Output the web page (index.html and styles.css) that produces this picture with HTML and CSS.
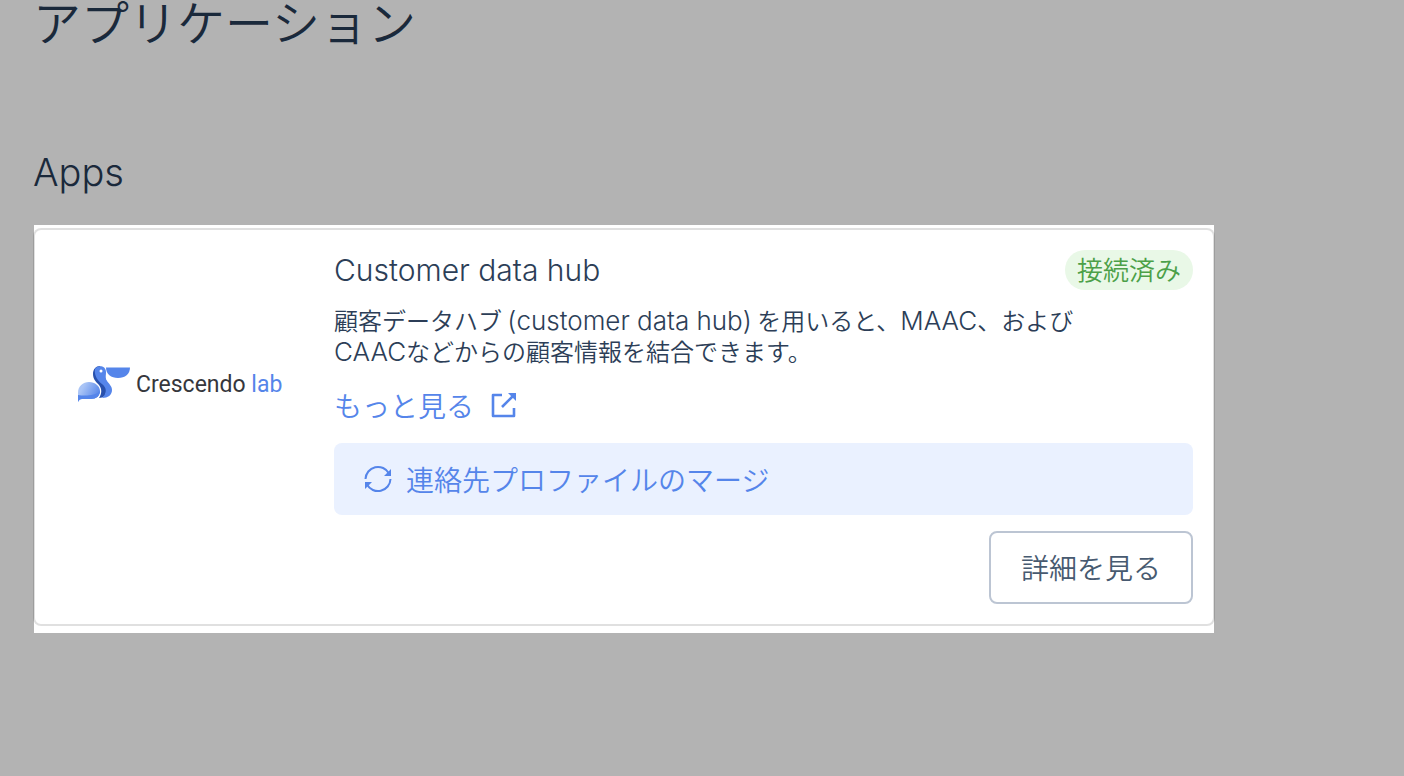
FILE: index.html
```html
<!DOCTYPE html>
<html lang="ja">
  <head>
    <meta charset="UTF-8" />
    <meta name="viewport" content="width=device-width, initial-scale=1" />
    <title>アプリケーション</title>
    <link rel="stylesheet" href="styles.css">
  </head>
  <body>
    <main class="page">
      <h1>アプリケーション</h1>
      <h2>Apps</h2>

      <div class="spotlight">
        <section class="app-card">
          <div class="logo">
            <svg class="logo-mark" viewBox="0 0 52 36" aria-hidden="true">
              <defs>
                <linearGradient id="wing" x1="0.2" y1="0.3" x2="1" y2="0.7">
                  <stop offset="0" stop-color="#a9c4f6" />
                  <stop offset="1" stop-color="#4f80e8" />
                </linearGradient>
              </defs>
              <path fill="#2850ac" d="M15 8C15 3 18 0 22 0l4 9 4 10-3 11c-2 1-4 2-6 2 3-5 3-9 0-13-3-3-6-6-6-11z" />
              <path fill="#5585ea" d="M17 3c2-4 11-4 11 3 0 4-1 6 1 9 2 3 5 5 5 9 0 5-4 8-10 8 5-5 5-10 0-14-5-4-8-9-7-15z" />
              <circle cx="23" cy="5" r="1.500" fill="#fff" />
              <path fill="#5585ea" d="M28 1.500h24C52 8 47 12 40 12S28 8 28 1.500z" />
              <path fill="url(#wing)" d="M0 36V27c0-7 5-11 11-11s11 4 11 9-4 8-9 8H4c-2 0-3 1-4 3z" />
              <path fill="#5585ea" d="M0 29c7 1 17 1 22-4 0 5-4 8-9 8H4c-2 0-3 1-4 3z" />
            </svg>
            <span class="logo-text">Crescendo <span>lab</span></span>
          </div>

          <div class="content">
            <div class="card-head">
              <h3>Customer data hub</h3>
              <span class="badge">接続済み</span>
            </div>
            <p class="desc">
              顧客データハブ <span class="latin">(customer data hub)</span> を用いると、<span class="latin">MAAC</span>、および<br /><span class="latin">CAAC</span>などからの顧客情報を結合できます。
            </p>
            <a class="more" href="#">
              もっと見る
              <svg viewBox="0 0 28 28" aria-hidden="true">
                <path d="M12 4H3v21h21v-8M12 16L23 5" fill="none" stroke="currentColor" stroke-width="2.6" stroke-linejoin="round" />
                <path d="M18 2h8v8z" fill="currentColor" />
              </svg>
            </a>
            <div class="feature">
              <svg viewBox="0 0 28 28" aria-hidden="true">
                <path d="M1.500 14A12.500 12.500 0 0 1 25 8.500M26.500 14A12.500 12.500 0 0 1 3 19.500" fill="none" stroke="currentColor" stroke-width="2" />
                <path d="M27 4v7h-7zM1 24v-7h7z" fill="currentColor" />
              </svg>
              連絡先プロファイルのマージ
            </div>
            <button class="detail-btn" type="button">詳細を見る</button>
          </div>
        </section>
      </div>
    </main>
  </body>
</html>
```

FILE: styles.css
```css
* {
  box-sizing: border-box;
}

body {
  margin: 0;
  background-color: #b3b3b3;
  color: #1a293b;
  font-family: "Noto Sans CJK JP", sans-serif;
  font-weight: 350;
}

.page {
  padding: 0 190px 40px 33px;
}

h1,
h2,
h3,
p {
  margin: 0;
  font-weight: 350;
}

h1 {
  font-size: 48px;
  line-height: 40px;
}

h2 {
  margin: 108px 0 29px;
  font-family: Inter, "Noto Sans CJK JP", sans-serif;
  font-size: 38px;
  line-height: 48px;
}

/* highlighted area behind the card */
.spotlight {
  margin-left: 1px;
  padding: 3px 0 7px;
  background-color: #fff;
}

.app-card {
  display: flex;
  margin: 0 -1px;
  padding: 20px;
  border: 2px solid rgba(0, 0, 0, 0.12);
  border-radius: 8px;
  background-color: #fff;
  background-clip: padding-box;
  color: #2c3e57;
}

.logo {
  display: flex;
  flex: 0 0 279px;
  align-items: center;
  align-self: flex-start;
  gap: 6px;
  margin-top: 116px;
  padding-left: 23px;
}

.logo-mark {
  width: 52px;
  height: 36px;
}

.logo-text {
  color: #36373c;
  font-family: Roboto, sans-serif;
  font-size: 23px;
  font-weight: 400;
  white-space: nowrap;
}

.logo-text span {
  color: #5585ea;
}

.content {
  display: flex;
  flex: 1;
  flex-direction: column;
}

.card-head {
  display: flex;
  align-items: center;
  justify-content: space-between;
}

h3 {
  font-family: Inter, "Noto Sans CJK JP", sans-serif;
  font-size: 30px;
  line-height: 40px;
}

.badge {
  padding: 0 12px 2px;
  border-radius: 20px;
  background-color: #e9f8e7;
  color: #4ca048;
  font-size: 26px;
  line-height: 38px;
}

.desc {
  margin-top: 14px;
  font-size: 24px;
  line-height: 31px;
}

.latin {
  font-family: Inter, sans-serif;
  font-size: 26px;
  line-height: 1;
}

.more {
  display: flex;
  align-items: center;
  align-self: flex-start;
  gap: 16px;
  margin-top: 19px;
  color: #5585ea;
  font-size: 28px;
  line-height: 40px;
  text-decoration: none;
}

.more svg,
.feature svg {
  width: 28px;
  height: 28px;
}

.feature {
  display: flex;
  align-items: center;
  gap: 14px;
  margin-top: 18px;
  padding: 16px 30px;
  border-radius: 8px;
  background-color: #eaf1ff;
  color: #5585ea;
  font-size: 28px;
  line-height: 40px;
}

.detail-btn {
  align-self: flex-end;
  margin-top: 16px;
  padding: 14px 30px;
  border: 2px solid #bcc5d3;
  border-radius: 8px;
  background-color: #fff;
  color: #475a70;
  font: inherit;
  font-size: 28px;
  line-height: 41px;
  cursor: pointer;
}
```
